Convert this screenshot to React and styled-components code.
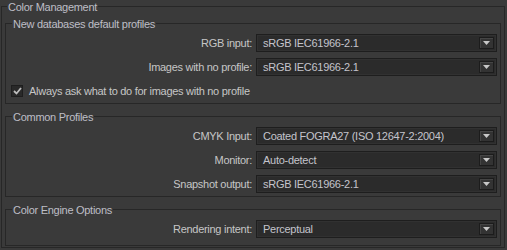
import React from "react";
import styled, { createGlobalStyle } from "styled-components";

const GlobalStyle = createGlobalStyle`
  html, body {
    margin: 0;
    padding: 0;
    background: #3a3a3a;
  }
  body {
    font-family: "Liberation Sans", Arial, sans-serif;
    font-size: 11px;
    letter-spacing: -0.28px;
    color: #c6c6c6;
  }
`;

const Page = styled.div`
  width: 507px;
  height: 250px;
  overflow: hidden;
  box-sizing: border-box;
  padding: 6px 2px 0 1px;
`;

const Group = styled.section`
  margin-top: ${(p) => p.$gap || 0}px;
  padding: ${(p) => p.$pad};
  border: 1px solid #272727;
`;

const Title = styled.div`
  width: fit-content;
  margin: -7px 0 0 ${(p) => p.$indent}px;
  padding: 0 1px;
  line-height: 14px;
  background: #3a3a3a;
  color: #bebec6;
`;

const Rows = styled.div`
  display: flex;
  flex-direction: column;
  gap: 6px;
  margin-top: 3px;
`;

const Row = styled.div`
  display: grid;
  grid-template-columns: 1fr 241px;
  column-gap: 4px;
  align-items: center;
  height: 18px;
`;

const Label = styled.span`
  text-align: right;
  white-space: nowrap;
`;

const Combo = styled.div`
  height: 18px;
  box-sizing: border-box;
  display: flex;
  align-items: center;
  justify-content: space-between;
  background: #2b2b2b;
  border: 1px solid #1e1e1e;
  box-shadow: inset 0 0 0 1px #313131;
  padding: 0 2px 0 6px;
`;

const ComboText = styled.span`
  color: #c4c4cc;
  white-space: nowrap;
`;

const ArrowButton = styled.span`
  width: 15px;
  height: 12px;
  box-sizing: border-box;
  display: flex;
  align-items: center;
  justify-content: center;
  background: #333333;
  border: 1px solid #1c1c1c;
  box-shadow: inset 1px 1px 0 #454545;
`;

const CheckRow = styled.label`
  display: flex;
  align-items: center;
  gap: 6px;
  height: 20px;
  margin-top: 5px;
  padding-left: 5px;
`;

const CheckBox = styled.span`
  width: 12px;
  height: 12px;
  box-sizing: border-box;
  display: flex;
  align-items: center;
  justify-content: center;
  background: #292929;
  border: 1px solid #1e1e1e;
`;

function Select({ label, value }) {
  return (
    <Row>
      <Label>{label}</Label>
      <Combo>
        <ComboText>{value}</ComboText>
        <ArrowButton>
          <svg width="7" height="4" viewBox="0 0 7 4">
            <path d="M0 0h7L3.5 4z" fill="#c8c8c8" />
          </svg>
        </ArrowButton>
      </Combo>
    </Row>
  );
}

export default function App() {
  return (
    <>
      <GlobalStyle />
      <Page>
        <Group $pad="0 3px 1px 3px">
          <Title $indent={2}>Color Management</Title>
          <Group $gap={9} $pad="0 3px 2px 0">
            <Title $indent={6}>New databases default profiles</Title>
            <Rows>
              <Select label="RGB input:" value="sRGB IEC61966-2.1" />
              <Select label="Images with no profile:" value="sRGB IEC61966-2.1" />
            </Rows>
            <CheckRow>
              <CheckBox>
                <svg width="9" height="8" viewBox="0 0 9 8">
                  <path
                    d="M1 4l2.5 2.5L8 1"
                    stroke="#bdbdbd"
                    strokeWidth="1.8"
                    fill="none"
                  />
                </svg>
              </CheckBox>
              Always ask what to do for images with no profile
            </CheckRow>
          </Group>
          <Group $gap={12} $pad="0 3px 3px 0">
            <Title $indent={6}>Common Profiles</Title>
            <Rows>
              <Select label="CMYK Input:" value="Coated FOGRA27 (ISO 12647-2:2004)" />
              <Select label="Monitor:" value="Auto-detect" />
              <Select label="Snapshot output:" value="sRGB IEC61966-2.1" />
            </Rows>
          </Group>
          <Group $gap={12} $pad="0 3px 7px 0">
            <Title $indent={6}>Color Engine Options</Title>
            <Rows>
              <Select label="Rendering intent:" value="Perceptual" />
            </Rows>
          </Group>
        </Group>
      </Page>
    </>
  );
}
